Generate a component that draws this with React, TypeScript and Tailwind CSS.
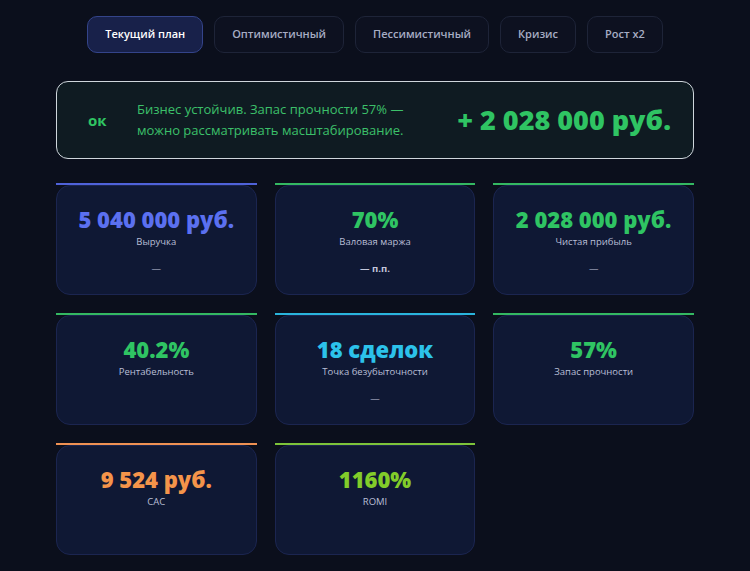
const tabs = ["Текущий план", "Оптимистичный", "Пессимистичный", "Кризис", "Рост x2"];

const metrics = [
  { value: "5 040 000 руб.", label: "Выручка", sub: "—", line: "bg-[#4f62d9]", text: "text-[#5b70f0]" },
  { value: "70%", label: "Валовая маржа", sub: "— п.п.", bold: true, line: "bg-[#34b862]", text: "text-[#2fc463]" },
  { value: "2 028 000 руб.", label: "Чистая прибыль", sub: "—", line: "bg-[#34b862]", text: "text-[#2fc463]" },
  { value: "40.2%", label: "Рентабельность", line: "bg-[#34b862]", text: "text-[#2fc463]" },
  { value: "18 сделок", label: "Точка безубыточности", sub: "—", line: "bg-[#2ab4dc]", text: "text-[#2cc2ea]" },
  { value: "57%", label: "Запас прочности", line: "bg-[#34b862]", text: "text-[#2fc463]" },
  { value: "9 524 руб.", label: "CAC", line: "bg-[#ef9153]", text: "text-[#f4944a]" },
  { value: "1160%", label: "ROMI", line: "bg-[#7dc33a]", text: "text-[#82cc2a]" },
];

export default function App() {
  return (
    <div className="min-h-[571px] bg-[#0b0f1c] font-['Open_Sans',sans-serif] pt-4 pb-4">
      <div className="flex justify-center gap-[11px]">
        {tabs.map((t, i) => (
          <button
            key={t}
            type="button"
            className={`h-[37px] rounded-[10px] border px-[17px] text-[11px] font-semibold ${
              i === 0
                ? "border-[#34448a] bg-[#18214a] text-white"
                : "border-[#1e2438] bg-[#0d1120] text-[#a7adc4]"
            }`}
          >
            {t}
          </button>
        ))}
      </div>

      <div className="mx-auto w-[638px] mt-[28px]">
        <div className="flex h-[78px] items-center rounded-[12px] border border-[#cfd6dc] bg-[#0f1b22] pl-[31px] pr-[22px]">
          <span className="w-[49px] text-[15px] font-bold text-[#2fc463]">ок</span>
          <p className="flex-1 text-[13px] leading-[21px] text-[#3cc06a]">
            Бизнес устойчив. Запас прочности 57% —<br />
            можно рассматривать масштабирование.
          </p>
          <span className="text-[27px] font-extrabold text-[#2fc463]">+ 2 028 000 руб.</span>
        </div>

        <div className="mt-[24px] grid grid-cols-3 gap-x-[18px] gap-y-[18px]">
          {metrics.map((m) => (
            <div key={m.label} className="flex flex-col">
              <div className={`h-[2px] ${m.line}`} />
              <div className="h-[110px] rounded-[14px] border border-[#1b2550] bg-[#0f1834] flex flex-col items-center pt-[18px]">
                <div className={`text-[22px] leading-[30px] font-extrabold ${m.text}`}>{m.value}</div>
                <div className="mt-[1px] text-[9.5px] text-[#b9bfd6]">{m.label}</div>
                {m.sub && (
                  <div className={`mt-[13px] text-[9.5px] text-[#c2c7dc] ${m.bold ? "font-bold" : ""}`}>{m.sub}</div>
                )}
              </div>
            </div>
          ))}
        </div>
      </div>
    </div>
  );
}
